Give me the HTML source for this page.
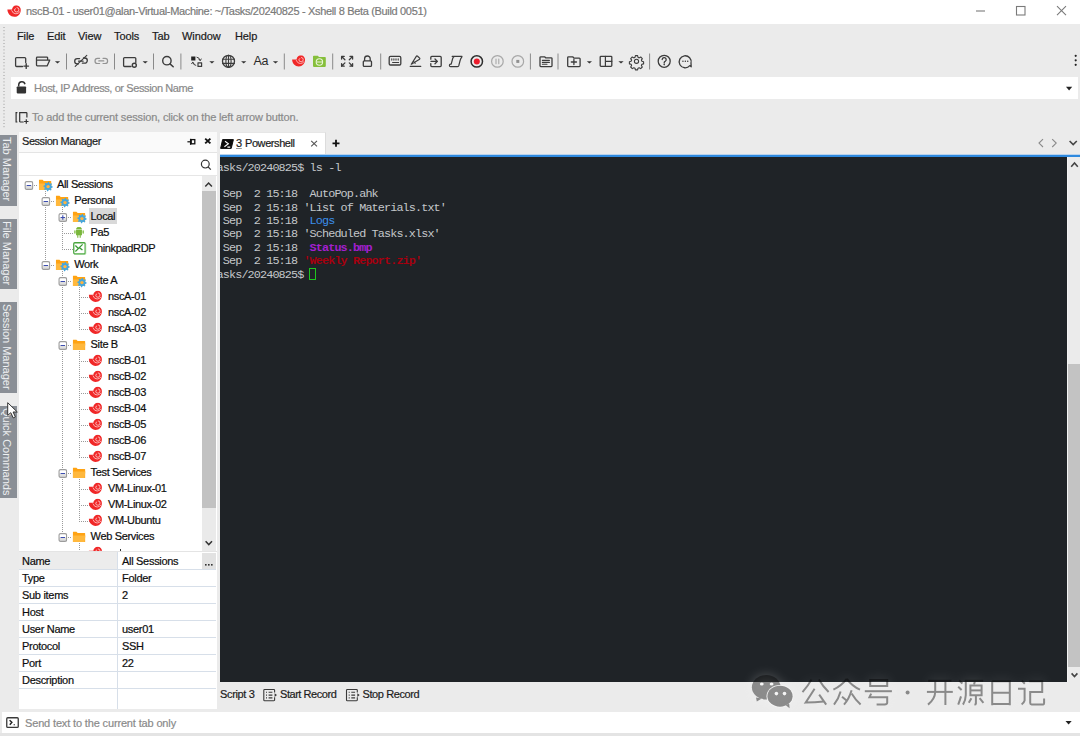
<!DOCTYPE html>
<html><head><meta charset="utf-8">
<style>
*{box-sizing:border-box}
html,body{margin:0;padding:0}
body{width:1080px;height:736px;position:relative;overflow:hidden;background:#ebebeb;font-family:"Liberation Sans",sans-serif;color:#1c1c1c}
.a{position:absolute}
.t{position:absolute;white-space:nowrap;font-size:11px;line-height:13px;-webkit-text-stroke:0.2px currentColor}
#title{left:0;top:0;width:1080px;height:24px;background:#fff}
.menu{top:30px;color:#1a1a1a;letter-spacing:-0.1px}
.vt{position:absolute;left:0;width:17px;background:#8a8f96}
.vtt{position:absolute;left:-1px;color:#eef0f2;font-size:11px;line-height:13px;white-space:nowrap;transform-origin:0 0;transform:rotate(90deg) translate(0,-14px)}
.tree{letter-spacing:-0.35px;color:#0e0e0e}
.prop{letter-spacing:-0.3px;color:#0e0e0e}
.term{position:absolute;font-family:"Liberation Mono",monospace;font-size:11.8px;line-height:13.38px;white-space:pre;color:#c4c7ca;letter-spacing:-0.88px}
</style></head><body>
<svg width="0" height="0" style="position:absolute"><defs>
<symbol id="swirl" viewBox="0 0 14 12">
<path d="M0.4 4.3H4.95A4.3 4.3 0 1 1 13.55 4.6C13.5 8.6 10.8 11.4 7.2 11.4C3.4 11.4 0.5 8.3 0.4 4.3Z" fill="#f02828"/>
<path d="M4.5 5Q5.9 8.6 8.8 8.5Q11.2 8.3 12.7 6.4" stroke="#ffbdbd" stroke-width="0.9" fill="none"/>
<path d="M9.5 2.3A2.2 2.2 0 1 1 7.3 4.6Q7.5 3.5 8.7 3.4" stroke="#ffc4c4" stroke-width="0.9" fill="none"/>
</symbol>
<linearGradient id="bxg" x1="0" y1="0" x2="0" y2="1"><stop offset="0.45" stop-color="#ffffff"/><stop offset="0.55" stop-color="#dedede"/></linearGradient>
<symbol id="boxminus" viewBox="0 0 9 9">
<rect x="0.65" y="0.65" width="7.7" height="7.7" rx="1.6" fill="url(#bxg)" stroke="#9c9c9c" stroke-width="1.3"/>
<path d="M2.3 4.5H6.7" stroke="#3c4db0" stroke-width="1.1"/>
</symbol>
<symbol id="boxplus" viewBox="0 0 9 9">
<rect x="0.65" y="0.65" width="7.7" height="7.7" rx="1.6" fill="url(#bxg)" stroke="#9c9c9c" stroke-width="1.3"/>
<path d="M2.3 4.5H6.7M4.5 2.3V6.7" stroke="#3c4db0" stroke-width="1.1"/>
</symbol>
<symbol id="f" viewBox="0 0 15 13">
<path d="M0 1.2Q0 0.7 0.5 0.7H3.7L4.9 1.9H11.9Q12.4 1.9 12.4 2.4V10.9H0Z" fill="#ffa313"/>
<path d="M0 10.9V4.4H12.6L11.8 10.9Z" fill="#ffb83d"/>
</symbol>
<symbol id="fg" viewBox="0 0 15 13">
<path d="M0 1.2Q0 0.7 0.5 0.7H3.7L4.9 1.9H11.9Q12.4 1.9 12.4 2.4V10.9H0Z" fill="#ffa313"/>
<path d="M0 10.9V4.4H12.6L11.8 10.9Z" fill="#ffb83d"/>
<path d="M9.20 2.90 L10.12 2.99 L10.54 4.37 L11.14 4.69 L12.52 4.28 L13.11 4.99 L12.43 6.26 L12.63 6.92 L13.90 7.60 L13.81 8.52 L12.43 8.94 L12.11 9.54 L12.52 10.92 L11.81 11.51 L10.54 10.83 L9.88 11.03 L9.20 12.30 L8.28 12.21 L7.86 10.83 L7.26 10.51 L5.88 10.92 L5.29 10.21 L5.97 8.94 L5.77 8.28 L4.50 7.60 L4.59 6.68 L5.97 6.26 L6.29 5.66 L5.88 4.28 L6.59 3.69 L7.86 4.37 L8.52 4.17Z" fill="#45a6de"/>
<circle cx="9.2" cy="7.6" r="1.7" fill="#ffb440"/>
</symbol>
<symbol id="android" viewBox="0 0 14 14">
<path d="M3.3 3.6A2.95 2.7 0 0 1 9.2 3.6Z" fill="#79b63b"/>
<path d="M3.3 4.1H9.2V9.2H8V11.7H6.9V9.2H5.6V11.7H4.5V9.2H3.3Z" fill="#79b63b"/>
<rect x="1.4" y="4.2" width="1.5" height="3.6" rx=".7" fill="#8cc457"/>
<rect x="9.7" y="4.2" width="1.5" height="3.6" rx=".7" fill="#8cc457"/>
<path d="M4.4 1L5 1.8M8.1 1L7.5 1.8" stroke="#79b63b" stroke-width=".6"/>
</symbol>
<symbol id="rdp" viewBox="0 0 14 14">
<rect x="1" y="0.75" width="11.4" height="11.1" rx="1" fill="#fff" stroke="#4aa63f" stroke-width="1.3"/>
<path d="M1.4 12.3H12.4Q13 12.3 13 11.6V1.6" fill="none" stroke="#8fcf86" stroke-width="0.9"/>
<path d="M2.6 3.5L5.6 6.6L2.6 9.5M9.9 2.4L6.5 5.6L9.7 8" fill="none" stroke="#3a9a35" stroke-width="1.3"/>
</symbol>
</defs></svg>
<div id="title" class="a"></div>
<div class="t" style="left:26px;top:5px;color:#7a7a7a;letter-spacing:-0.33px">nscB-01 - user01@alan-Virtual-Machine: ~/Tasks/20240825 - Xshell 8 Beta (Build 0051)</div>

<!-- menu -->
<div class="t menu" style="left:17px">File</div>
<div class="t menu" style="left:47px">Edit</div>
<div class="t menu" style="left:78px">View</div>
<div class="t menu" style="left:114px">Tools</div>
<div class="t menu" style="left:152px">Tab</div>
<div class="t menu" style="left:182px">Window</div>
<div class="t menu" style="left:235px">Help</div>

<!-- address bar -->
<div class="a" style="left:11px;top:77px;width:1067px;height:22px;background:#fff"></div>
<div class="t" style="left:34px;top:82px;color:#8a8a8a;letter-spacing:-0.4px">Host, IP Address, or Session Name</div>
<div class="t" style="left:32px;top:111px;color:#8a8a8a;letter-spacing:-0.15px">To add the current session, click on the left arrow button.</div>


<!-- toolbar -->
<svg class="a" style="left:0;top:0" width="1080" height="132" viewBox="0 0 1080 132">
<g fill="none" stroke="#3c3c3c" stroke-width="1.3" stroke-linecap="round" stroke-linejoin="round">
 <!-- grip -->
 <path d="M4 27V128" stroke="#9a9a9a" stroke-width="1" stroke-dasharray="1 2.2" stroke-linecap="butt"/>
 <!-- new session -->
 <path d="M25.7 62.5V58.6a1 1 0 0 0-1-1H16.6a1 1 0 0 0-1 1v6.9a1 1 0 0 0 1 1H22.5"/>
 <path d="M26.2 63.8v4.6M23.9 66.1h4.6" stroke-width="1.4"/>
 <!-- open folder -->
 <path d="M47.6 59.2V57.9a.8.8 0 0 0-.8-.8H37.3a.8.8 0 0 0-.8.8V65.1a.8.8 0 0 0 .8.8H47.1L49.7 60.2H37.6"/>
 <!-- broken link -->
 <path d="M79.6 58.6h-2.3a2.6 2.6 0 0 0 0 5.2h1.2M82.4 63.2h2.3a2.6 2.6 0 0 0 0-5.2h-1.2M78.6 61.2l4.5 0" />
 <path d="M75.2 66.4L86.8 55.4" stroke-width="1.1"/>
 <!-- link gray -->
 <g stroke="#939393" stroke-width="1.2"><path d="M99.6 58.3h-2a2.6 2.6 0 0 0 0 5.2h2M103 58.3h2a2.6 2.6 0 0 1 0 5.2h-2M98.8 60.9h5"/></g>
 <!-- box gear -->
 <path d="M135.8 62.4V58.6a1 1 0 0 0-1-1H124.6a1 1 0 0 0-1 1v6.9a1 1 0 0 0 1 1H131"/>
 <circle cx="134.3" cy="65.2" r="2" stroke-width="1.4"/>
 <!-- search -->
 <circle cx="166.9" cy="60.7" r="4.2" stroke-width="1.4"/>
 <path d="M170 63.9l3.2 2.9" stroke-width="1.5"/>
 <!-- transfer -->
 <rect x="191.2" y="56.5" width="4.2" height="4" fill="#222" stroke="none"/>
 <rect x="198" y="62.8" width="3.6" height="3.6" stroke-width="1.2"/>
 <path d="M197 57.2q2.6 0.3 3.2 3.2M199 59.4l1.2 1.2 1-1.6M195.8 65.4q-2.6-.3-3.1-3.1M193.8 63.4l-1.1-1.2-1 1.5" stroke-width="1"/>
 <!-- globe -->
 <circle cx="228.5" cy="61.3" r="6" stroke-width="1.3"/>
 <ellipse cx="228.5" cy="61.3" rx="2.6" ry="6" stroke-width="1.1"/>
 <path d="M222.6 59.2h11.8M222.6 63.4h11.8M228.5 55.3v12" stroke-width="1.1"/>
 <!-- fullscreen -->
 <path d="M341.6 56.4l3.3 3.3M341.6 56.4v2.6M341.6 56.4h2.6M352.6 56.4l-3.3 3.3M352.6 56.4v2.6M352.6 56.4h-2.6M341.6 66.2l3.3-3.3M341.6 66.2v-2.6M341.6 66.2h2.6M352.6 66.2l-3.3-3.3M352.6 66.2v-2.6M352.6 66.2h-2.6" stroke-width="1.3"/>
 <!-- lock -->
 <path d="M364.6 60.6v-1.8a2.8 2.8 0 0 1 5.6 0v1.8"/>
 <rect x="363.3" y="60.8" width="8.2" height="5.6" rx="1"/>
 <!-- keyboard -->
 <rect x="389.2" y="56.4" width="11.6" height="8.6" rx="1.3"/>
 <path d="M391.8 58.7v1.4M393.9 58.7v1.4M396 58.7v1.4M398.2 58.7v1.4M392.6 62.5h6" stroke-width="1.1"/>
 <!-- pen -->
 <path d="M411.3 64.2L416.3 56.4Q416.9 55.6 417.6 56.2L419.9 58.4M411.3 64.2L419.6 59.2M413.3 61.4L415.3 63.2M410.2 66.3h10.6" stroke-width="1.2"/>
 <!-- arrow into box -->
 <path d="M430.8 59.2V57.4a1 1 0 0 1 1-1H440.2a1 1 0 0 1 1 1V65.6a1 1 0 0 1-1 1H431.8a1 1 0 0 1-1-1V63.6"/>
 <path d="M431 61.4h6.4M435 59l2.4 2.4L435 63.8"/>
 <!-- script -->
 <path d="M452.2 56.4h9.8l-.3 .8q-1 .9-1.6 3.3l-1.3 5.2q-.5.9-1.6.9h-6.6a1.2 1.2 0 0 1 0-2.4h.6l1.5-5.7q.6-1.8 1.8-2.1z" stroke-width="1.2"/>
 <!-- record -->
 <circle cx="476.8" cy="61.4" r="5.7" stroke="#2d2d2d" stroke-width="1.5"/>
 <circle cx="476.8" cy="61.4" r="3" fill="#ec1c2c" stroke="none"/>
 <!-- pause -->
 <circle cx="497.4" cy="61.4" r="5.8" stroke="#a8a8a8" stroke-width="1.2"/>
 <path d="M496 59v4.8M498.8 59v4.8" stroke="#a8a8a8" stroke-width="1.1"/>
 <!-- stop -->
 <circle cx="517.8" cy="61.4" r="5.8" stroke="#a8a8a8" stroke-width="1.2"/>
 <rect x="516.3" y="59.9" width="3" height="3" fill="#909090" stroke="none"/>
 <!-- doc list -->
 <path d="M540 58.2v7.6a.8.8 0 0 0 .8.8h10.4a.8.8 0 0 0 .8-.8v-7.2a.8.8 0 0 0-.8-.8h-5.6l-1-1h-3.8a.8.8 0 0 0-.8.8z" stroke-width="1.3"/>
 <path d="M542.4 60.4h7M542.4 62.4h7M542.4 64.3h4.6" stroke-width="1.1"/>
 <!-- folder plus -->
 <path d="M567.7 57.6v8.2a.8.8 0 0 0 .8.8h10.8a.8.8 0 0 0 .8-.8v-6.8a.8.8 0 0 0-.8-.8h-5.2l-1.4-1.4h-4.2a.8.8 0 0 0-.8.8z" stroke-width="1.3"/>
 <path d="M573.9 59.4v5.2M571.3 62h5.2" stroke-width="1.3"/>
 <!-- layout -->
 <rect x="600.2" y="56.3" width="11.6" height="10" rx=".8"/>
 <path d="M605.4 56.3v10M605.4 61.3h6.4" stroke-width="1.2"/>
 <!-- gear -->
 <path d="M635.4 55.6h2.2l.4 1.7 1.2.6 1.5-.9 1.6 1.6-.9 1.5.5 1.2 1.7.4v2.2l-1.7.4-.5 1.2.9 1.5-1.6 1.6-1.5-.9-1.2.5-.4 1.7h-2.2l-.4-1.7-1.2-.5-1.5.9-1.6-1.6.9-1.5-.5-1.2-1.7-.4v-2.2l1.7-.4.5-1.2-.9-1.5 1.6-1.6 1.5.9 1.2-.6z" stroke-width="1.1"/>
 <circle cx="636.5" cy="61.3" r="2.1" stroke-width="1.1"/>
 <!-- help -->
 <circle cx="664.2" cy="61.3" r="6" stroke-width="1.3"/>
 <path d="M662.2 59.6a2 2 0 1 1 2.9 1.8q-.9.4-.9 1.3v.4" stroke-width="1.3"/>
 <circle cx="664.2" cy="64.6" r=".8" fill="#3c3c3c" stroke="none"/>
 <!-- chat -->
 <path d="M691.2 66.8l-1.4-1.2A6 6 0 1 1 691 63.2z" stroke-width="1.3"/>
 <path d="M682.9 61.3h.1M685.3 61.3h.1M687.7 61.3h.1" stroke-width="1.4"/>
 <!-- separators -->
 <g stroke="#8a8a8a" stroke-width="1" stroke-linecap="butt"><path d="M66.5 53.5v16M114.5 53.5v16M153.5 53.5v16M180.9 53.5v16M284.3 53.5v16M332.7 53.5v16M380.7 53.5v16M530.4 53.5v16M558 53.5v16M649.6 53.5v16"/></g>
</g>
<!-- dropdown triangles -->
<g fill="#333"><path d="M54.9 61.2h5.2l-2.6 2.4z"/><path d="M142.6 61.2h5.2l-2.6 2.4z"/><path d="M209.3 61.2h5.2l-2.6 2.4z"/><path d="M241.1 61.2h5.2l-2.6 2.4z"/><path d="M272.9 61.2h5.2l-2.6 2.4z"/><path d="M586.8 61.2h5.2l-2.6 2.4z"/><path d="M618.4 61.2h5.2l-2.6 2.4z"/></g>
<text x="253.6" y="65" font-family="Liberation Sans" font-size="12.5" fill="#2a2a2a" letter-spacing="-0.5">Aa</text>
<!-- swirl toolbar -->
<g transform="translate(291.5 55.2)"><use href="#swirl" width="14.2" height="11.8"/></g>
<!-- green folder -->
<path d="M313 56.6a.8.8 0 0 1 .8-.8h4l1.2 1.2h6a.8.8 0 0 1 .8.8v8.3a.8.8 0 0 1-.8.8h-11.2a.8.8 0 0 1-.8-.8z" fill="#86bf3b"/>
<circle cx="319.4" cy="62" r="3.2" fill="none" stroke="#e9f5d8" stroke-width="1.1"/>
<path d="M316.5 62h5.8" stroke="#e9f5d8" stroke-width="1"/>
<!-- dots -->
<g fill="#222"><circle cx="1075.7" cy="55.8" r="1.1"/><circle cx="1075.7" cy="60.3" r="1.1"/><circle cx="1075.7" cy="64.8" r="1.1"/></g>
<!-- address lock -->
<path d="M18.7 86.6v-1.8a3.2 3.2 0 0 1 6.3-.6" fill="none" stroke="#333" stroke-width="1.5"/>
<rect x="16.7" y="86.4" width="9.4" height="7" rx=".8" fill="#333"/>
<path d="M1066 86.8h6.2l-3.1 3.6z" fill="#222"/>
<!-- info icon -->
<path d="M17.4 112.6h-1.3v9.4h1.3M19.7 122V112.6h6.5a.7.7 0 0 1 .7.7v4.2M19.7 122h4" fill="none" stroke="#333" stroke-width="1.2"/>
<path d="M26.3 119.3v4.4M24.1 121.5h4.4" fill="none" stroke="#333" stroke-width="1.2"/>
<!-- window controls -->
<path d="M976 11h9" stroke="#7a7a7a" stroke-width="1.1"/>
<rect x="1016.5" y="6.5" width="8.5" height="8.5" fill="none" stroke="#7a7a7a" stroke-width="1.1"/>
<path d="M1057 6.2l9 9M1066 6.2l-9 9" stroke="#7a7a7a" stroke-width="1.1"/>
<!-- title icon -->
<g transform="translate(6.8 5.2)"><use href="#swirl" width="14.6" height="12.2"/></g>
</svg>

<!-- vertical tabs -->
<div class="vt" style="top:135px;height:71px"><div class="vtt" style="top:2px">Tab Manager</div></div>
<div class="vt" style="top:219px;height:70px"><div class="vtt" style="top:2px">File Manager</div></div>
<div class="vt" style="top:302px;height:91px"><div class="vtt" style="top:2px">Session Manager</div></div>
<div class="vt" style="top:406px;height:92px"><div class="vtt" style="top:2px">Quick Commands</div></div>

<!-- session panel -->
<div class="a" style="left:19px;top:132px;width:198px;height:421px;background:#fff"></div>
<div class="a" style="left:19px;top:132px;width:198px;height:21px;background:#fafafa;border-bottom:1px solid #e4e4e4"></div>
<div class="t" style="left:22px;top:135px;letter-spacing:-0.45px">Session Manager</div>
<div class="a" style="left:19px;top:175px;width:198px;height:1px;background:#e6e6e6"></div>
<svg class="a" style="left:180px;top:132px" width="40" height="46" viewBox="180 132 40 46">
<path d="M187.4 141.8H190.6" stroke="#111" stroke-width="1.2"/>
<path d="M190.6 138.8V144.8" stroke="#111" stroke-width="1.3"/>
<rect x="191.2" y="139.6" width="3.6" height="4.2" fill="none" stroke="#111" stroke-width="1.3"/>
<path d="M205.2 138.6L210.4 143.4M210.4 138.6L205.2 143.4" stroke="#111" stroke-width="1.9"/>
<circle cx="205.3" cy="164.1" r="3.9" fill="none" stroke="#333" stroke-width="1.2"/>
<path d="M208.1 166.9L210.8 169.6" stroke="#333" stroke-width="1.3"/>
</svg>
<!-- tree scrollbar -->
<div class="a" style="left:202px;top:176px;width:14px;height:375px;background:#eaeaea"></div>
<div class="a" style="left:202px;top:191px;width:14px;height:317px;background:#c2c2c2"></div>
<svg class="a" style="left:200px;top:176px" width="18" height="376" viewBox="200 176 18 376">
<path d="M205.3 186.4L208.6 183L211.9 186.4" fill="none" stroke="#333" stroke-width="1.5"/>
<path d="M205.6 541.3L208.8 544.6L212 541.3" fill="none" stroke="#333" stroke-width="1.5"/>
</svg>
<!-- properties -->
<div class="a" style="left:19px;top:551px;width:198px;height:2px;background:#e4e4e4"></div>
<div class="a" style="left:120px;top:549px;width:1px;height:2px;background:#333"></div>
<div class="a" style="left:19px;top:552px;width:198px;height:157px;background:#fff"></div>
<div class="a" style="left:19px;top:552px;width:98px;height:17px;background:#ececec"></div>
<div class="a" style="left:202px;top:553px;width:14px;height:16px;background:#e2e2e2"></div>
<svg class="a" style="left:0;top:540px" width="220" height="180" viewBox="0 540 220 180">
<g stroke="#d7dfe9" stroke-width="1">
<path d="M19 569.5H216M19 586.5H216M19 603.5H216M19 620.5H216M19 637.5H216M19 654.5H216M19 671.5H216M19 688.5H216"/>
<path d="M117.5 552V709"/>
</g>
<g fill="#333"><rect x="205" y="564" width="1.6" height="1.6"/><rect x="208" y="564" width="1.6" height="1.6"/><rect x="211" y="564" width="1.6" height="1.6"/></g>
</svg>
<div class="t prop" style="left:22px;top:555px">Name</div><div class="t prop" style="left:122px;top:555px">All Sessions</div>
<div class="t prop" style="left:22px;top:572px">Type</div><div class="t prop" style="left:122px;top:572px">Folder</div>
<div class="t prop" style="left:22px;top:589px">Sub items</div><div class="t prop" style="left:122px;top:589px">2</div>
<div class="t prop" style="left:22px;top:606px">Host</div>
<div class="t prop" style="left:22px;top:623px">User Name</div><div class="t prop" style="left:122px;top:623px">user01</div>
<div class="t prop" style="left:22px;top:640px">Protocol</div><div class="t prop" style="left:122px;top:640px">SSH</div>
<div class="t prop" style="left:22px;top:657px">Port</div><div class="t prop" style="left:122px;top:657px">22</div>
<div class="t prop" style="left:22px;top:674px">Description</div>

<div class="a" style="left:19px;top:176px;width:183px;height:375px;overflow:hidden">
<svg class="a" style="left:-19px;top:-176px" width="220" height="736" viewBox="0 0 220 736">
<path d="M45.5 191V266" stroke="#9a9a9a" stroke-width="1" stroke-dasharray="1 1"/>
<path d="M62.5 207V250" stroke="#9a9a9a" stroke-width="1" stroke-dasharray="1 1"/>
<path d="M62.5 271V538" stroke="#9a9a9a" stroke-width="1" stroke-dasharray="1 1"/>
<path d="M79.5 287V330" stroke="#9a9a9a" stroke-width="1" stroke-dasharray="1 1"/>
<path d="M79.5 351V458" stroke="#9a9a9a" stroke-width="1" stroke-dasharray="1 1"/>
<path d="M79.5 479V522" stroke="#9a9a9a" stroke-width="1" stroke-dasharray="1 1"/>
<path d="M79.5 543V560" stroke="#9a9a9a" stroke-width="1" stroke-dasharray="1 1"/>
<path d="M32 185.5H38" stroke="#9a9a9a" stroke-width="1" stroke-dasharray="1 1"/>
<path d="M49 201.5H55" stroke="#9a9a9a" stroke-width="1" stroke-dasharray="1 1"/>
<path d="M66 217.5H72" stroke="#9a9a9a" stroke-width="1" stroke-dasharray="1 1"/>
<path d="M62 233.5H73" stroke="#9a9a9a" stroke-width="1" stroke-dasharray="1 1"/>
<path d="M62 249.5H73" stroke="#9a9a9a" stroke-width="1" stroke-dasharray="1 1"/>
<path d="M49 265.5H55" stroke="#9a9a9a" stroke-width="1" stroke-dasharray="1 1"/>
<path d="M66 281.5H72" stroke="#9a9a9a" stroke-width="1" stroke-dasharray="1 1"/>
<path d="M79 297.5H90" stroke="#9a9a9a" stroke-width="1" stroke-dasharray="1 1"/>
<path d="M79 313.5H90" stroke="#9a9a9a" stroke-width="1" stroke-dasharray="1 1"/>
<path d="M79 329.5H90" stroke="#9a9a9a" stroke-width="1" stroke-dasharray="1 1"/>
<path d="M66 345.5H72" stroke="#9a9a9a" stroke-width="1" stroke-dasharray="1 1"/>
<path d="M79 361.5H90" stroke="#9a9a9a" stroke-width="1" stroke-dasharray="1 1"/>
<path d="M79 377.5H90" stroke="#9a9a9a" stroke-width="1" stroke-dasharray="1 1"/>
<path d="M79 393.5H90" stroke="#9a9a9a" stroke-width="1" stroke-dasharray="1 1"/>
<path d="M79 409.5H90" stroke="#9a9a9a" stroke-width="1" stroke-dasharray="1 1"/>
<path d="M79 425.5H90" stroke="#9a9a9a" stroke-width="1" stroke-dasharray="1 1"/>
<path d="M79 441.5H90" stroke="#9a9a9a" stroke-width="1" stroke-dasharray="1 1"/>
<path d="M79 457.5H90" stroke="#9a9a9a" stroke-width="1" stroke-dasharray="1 1"/>
<path d="M66 473.5H72" stroke="#9a9a9a" stroke-width="1" stroke-dasharray="1 1"/>
<path d="M79 489.5H90" stroke="#9a9a9a" stroke-width="1" stroke-dasharray="1 1"/>
<path d="M79 505.5H90" stroke="#9a9a9a" stroke-width="1" stroke-dasharray="1 1"/>
<path d="M79 521.5H90" stroke="#9a9a9a" stroke-width="1" stroke-dasharray="1 1"/>
<path d="M66 537.5H72" stroke="#9a9a9a" stroke-width="1" stroke-dasharray="1 1"/>
<path d="M79 553.5H90" stroke="#9a9a9a" stroke-width="1" stroke-dasharray="1 1"/>
<use href="#boxminus" x="24.40" y="181.00" width="9" height="9"/>
<use href="#fg" x="38.85" y="179" width="15" height="13"/>
<use href="#boxminus" x="41.35" y="197.00" width="9" height="9"/>
<use href="#fg" x="55.80" y="195" width="15" height="13"/>
<use href="#boxplus" x="58.30" y="213.00" width="9" height="9"/>
<use href="#fg" x="72.75" y="211" width="15" height="13"/>
<use href="#android" x="72.75" y="226" width="14" height="14"/>
<use href="#rdp" x="72.75" y="242" width="14" height="14"/>
<use href="#boxminus" x="41.35" y="261.00" width="9" height="9"/>
<use href="#fg" x="55.80" y="259" width="15" height="13"/>
<use href="#boxminus" x="58.30" y="277.00" width="9" height="9"/>
<use href="#fg" x="72.75" y="275" width="15" height="13"/>
<use href="#swirl" x="88.30" y="290.6" width="14.2" height="11.9"/>
<use href="#swirl" x="88.30" y="306.6" width="14.2" height="11.9"/>
<use href="#swirl" x="88.30" y="322.6" width="14.2" height="11.9"/>
<use href="#boxminus" x="58.30" y="341.00" width="9" height="9"/>
<use href="#f" x="72.75" y="339" width="15" height="13"/>
<use href="#swirl" x="88.30" y="354.6" width="14.2" height="11.9"/>
<use href="#swirl" x="88.30" y="370.6" width="14.2" height="11.9"/>
<use href="#swirl" x="88.30" y="386.6" width="14.2" height="11.9"/>
<use href="#swirl" x="88.30" y="402.6" width="14.2" height="11.9"/>
<use href="#swirl" x="88.30" y="418.6" width="14.2" height="11.9"/>
<use href="#swirl" x="88.30" y="434.6" width="14.2" height="11.9"/>
<use href="#swirl" x="88.30" y="450.6" width="14.2" height="11.9"/>
<use href="#boxminus" x="58.30" y="469.00" width="9" height="9"/>
<use href="#f" x="72.75" y="467" width="15" height="13"/>
<use href="#swirl" x="88.30" y="482.6" width="14.2" height="11.9"/>
<use href="#swirl" x="88.30" y="498.6" width="14.2" height="11.9"/>
<use href="#swirl" x="88.30" y="514.6" width="14.2" height="11.9"/>
<use href="#boxminus" x="58.30" y="533.00" width="9" height="9"/>
<use href="#f" x="72.75" y="531" width="15" height="13"/>
<use href="#swirl" x="88.30" y="546.6" width="14.2" height="11.9"/>
</svg>
<div class="a" style="left:-19px;top:-176px;width:220px;height:736px">
<div class="t tree" style="left:57px;top:178px">All Sessions</div>
<div class="t tree" style="left:74.2px;top:194px">Personal</div>
<div class="a" style="left:88.7px;top:208px;width:28.3px;height:16px;background:#d9d9d9"></div>
<div class="t tree sel" style="left:90.6px;top:210px">Local</div>
<div class="t tree" style="left:90.6px;top:226px">Pa5</div>
<div class="t tree" style="left:90.6px;top:242px">ThinkpadRDP</div>
<div class="t tree" style="left:74.2px;top:258px">Work</div>
<div class="t tree" style="left:90.6px;top:274px">Site A</div>
<div class="t tree" style="left:108px;top:290px">nscA-01</div>
<div class="t tree" style="left:108px;top:306px">nscA-02</div>
<div class="t tree" style="left:108px;top:322px">nscA-03</div>
<div class="t tree" style="left:90.6px;top:338px">Site B</div>
<div class="t tree" style="left:108px;top:354px">nscB-01</div>
<div class="t tree" style="left:108px;top:370px">nscB-02</div>
<div class="t tree" style="left:108px;top:386px">nscB-03</div>
<div class="t tree" style="left:108px;top:402px">nscB-04</div>
<div class="t tree" style="left:108px;top:418px">nscB-05</div>
<div class="t tree" style="left:108px;top:434px">nscB-06</div>
<div class="t tree" style="left:108px;top:450px">nscB-07</div>
<div class="t tree" style="left:90.6px;top:466px">Test Services</div>
<div class="t tree" style="left:108px;top:482px">VM-Linux-01</div>
<div class="t tree" style="left:108px;top:498px">VM-Linux-02</div>
<div class="t tree" style="left:108px;top:514px">VM-Ubuntu</div>
<div class="t tree" style="left:90.6px;top:530px">Web Services</div>
<div class="t tree" style="left:108px;top:546px"></div>
</div></div>
<!-- terminal -->
<div class="a" style="left:220px;top:132px;width:106px;height:23px;background:#fff;border-right:1px solid #dcdcdc;border-top:1px solid #e6e6e6"></div>
<div class="a" style="left:220px;top:154px;width:860px;height:1px;background:#b9d3ee"></div>
<div class="a" style="left:220px;top:155px;width:860px;height:2px;background:#2e89de"></div>
<div class="a" style="left:220px;top:157px;width:847px;height:525px;background:#1f2327;overflow:hidden">
<div class="term" style="left:-3.4px;top:4.6px">asks/20240825$ ls -l

 Sep  2 15:18  AutoPop.ahk
 Sep  2 15:18 'List of Materials.txt'
 Sep  2 15:18  <span style="color:#3b8eea">Logs</span>
 Sep  2 15:18 'Scheduled Tasks.xlsx'
 Sep  2 15:18  <b style="color:#a31fcf">Status.bmp</b>
 Sep  2 15:18 <b style="color:#a5000f">'Weekly Report.zip'</b>
asks/20240825$ </div>
<div class="a" style="left:89px;top:110.5px;width:7px;height:12.5px;border:1.3px solid #1fc51f"></div>
</div>
<div class="a" style="left:1067px;top:157px;width:13px;height:525px;background:#ebebeb;border-left:1px solid #f4f4f4"></div>
<div class="a" style="left:1068px;top:364px;width:12px;height:303px;background:#c3c3c3"></div>
<svg class="a" style="left:210px;top:132px" width="870" height="40" viewBox="210 132 870 40">
<path d="M222.6 139.6H233.4L231.2 148.4H220.6Z" fill="#0c0c0c" stroke="#0c0c0c" stroke-width="1" stroke-linejoin="round"/>
<path d="M225 141.2L228.4 143.8L224.4 146.8M227.4 147.1H230.2" fill="none" stroke="#fff" stroke-width="1.1"/>
<path d="M311.2 140.8L317 146.4M317 140.8L311.2 146.4" stroke="#555" stroke-width="1.1"/>
<path d="M336 139.8V146.8M332.5 143.3H339.5" stroke="#111" stroke-width="1.8"/>
<path d="M1043 139.2L1039 143.1L1043 147M1052.2 139.2L1056.2 143.1L1052.2 147" fill="none" stroke="#8a8a8a" stroke-width="1.1"/>
<path d="M1069.6 141L1073.2 144.6L1076.8 141" fill="none" stroke="#444" stroke-width="1.6"/>
<path d="M1071.2 166.7L1074.5 163L1077.8 166.7" fill="none" stroke="#444" stroke-width="1.6"/>
</svg>
<div class="t" style="left:236px;top:137px;letter-spacing:-0.3px;text-decoration:underline;text-decoration-color:#999">3</div>
<div class="t" style="left:245px;top:137px;letter-spacing:-0.42px">Powershell</div>
<!-- bottom bar -->
<svg class="a" style="left:200px;top:670px" width="880" height="40" viewBox="200 670 880 40">
<path d="M1071.6 673.4L1074.5 676.6L1077.4 673.4" fill="none" stroke="#444" stroke-width="1.6"/>
<g fill="none" stroke="#3a3a3a" stroke-width="1.1">
<path d="M274.6 692.5V690.3a.8.8 0 0 0-.8-.8H264.6a.8.8 0 0 0-.8.8V699.9a.8.8 0 0 0 .8.8H273.8a.8.8 0 0 0 .8-.8V697.3"/>
<path d="M266 692.3H267M268.6 692.3H272.4M266 695.1H267M268.6 695.1H272.4M266 697.9H267M268.6 697.9H272.4"/>
<path d="M357.3 692.5V690.3a.8.8 0 0 0-.8-.8H347.3a.8.8 0 0 0-.8.8V699.9a.8.8 0 0 0 .8.8H356.5a.8.8 0 0 0 .8-.8V697.3"/>
<path d="M348.7 692.3H349.7M351.3 692.3H355.1M348.7 695.1H349.7M351.3 695.1H355.1M348.7 697.9H349.7M351.3 697.9H355.1"/>
</g>
<path d="M274.6 693.3L277 695.1L274.6 696.9Z M357.3 693.3L359.7 695.1L357.3 696.9Z" fill="#3a3a3a"/>
</svg>
<div class="t" style="left:220px;top:688px;letter-spacing:-0.35px">Script 3</div>
<div class="t" style="left:280px;top:688px;letter-spacing:-0.45px">Start Record</div>
<div class="t" style="left:362.5px;top:688px;letter-spacing:-0.4px">Stop Record</div>

<!-- send bar -->
<div class="a" style="left:0;top:733px;width:1080px;height:3px;background:#e4e4e4"></div>
<div class="a" style="left:2px;top:712px;width:1078px;height:21px;background:#fff"></div>
<svg class="a" style="left:0;top:710px" width="1080" height="26" viewBox="0 710 1080 26">
<rect x="6.75" y="717.75" width="11.5" height="9.7" rx="1" fill="none" stroke="#3a3a3a" stroke-width="1.3"/>
<path d="M9.6 720.2L11.9 722.3L9.8 724.8" fill="none" stroke="#222" stroke-width="1.4"/>
<rect x="13.6" y="724.2" width="1.3" height="1.1" fill="#333"/>
<path d="M1065.5 721h6.2l-3.1 3.4z" fill="#222"/>
</svg>
<div class="t" style="left:25px;top:717px;color:#8a8a8a;letter-spacing:-0.15px">Send text to the current tab only</div>
<!-- watermark -->
<svg class="a" style="left:700px;top:640px" width="380" height="80" viewBox="700 640 380 80">
<defs>
<filter id="halo" x="-20%" y="-60%" width="140%" height="220%"><feColorMatrix type="matrix" values="0 0 0 0 1  0 0 0 0 1  0 0 0 0 1  0 0 0 1 0"/><feGaussianBlur stdDeviation="5.5"/></filter>
<g id="wmg">
<ellipse cx="766.25" cy="687.2" rx="14.35" ry="12.3" fill="#000"/>
<path d="M756 697.5L756.8 701.4L761.8 698.6Z" fill="#000"/>
<ellipse cx="780" cy="696.2" rx="13.5" ry="11.3" fill="#fff"/>
<ellipse cx="780" cy="696.2" rx="12.6" ry="10.5" fill="#000"/>
<path d="M785.5 705L789.6 708.2L789.2 703.8Z" fill="#000"/>
<ellipse cx="761.8" cy="684" rx="1.9" ry="1.5" fill="#fff"/>
<ellipse cx="771.6" cy="684" rx="1.9" ry="1.5" fill="#fff"/>
<circle cx="776.4" cy="693.6" r="1.8" fill="#fff"/>
<circle cx="784.5" cy="693.6" r="1.8" fill="#fff"/>
<g fill="none" stroke="#000" stroke-width="2" stroke-linecap="butt" stroke-linejoin="miter">
<!-- gong -->
<path d="M811.4 679.6Q808 686 802.5 692.2"/>
<path d="M818.9 679.6Q822.8 686.5 828.6 692"/>
<path d="M814.6 688.8L805.6 702.6Q815 702.2 823.8 701.4"/>
<path d="M819.2 694.6L826.2 704.6"/>
<!-- zhong -->
<path d="M846.8 678.8Q841 686 833.4 689.6"/>
<path d="M846.8 678.8Q852 686 860 689.6"/>
<path d="M840.6 691.4Q838.5 699 834 704.6"/>
<path d="M842 696.8L846.6 700.6"/>
<path d="M851.6 690.2Q849 699 844 704.6"/>
<path d="M851.6 693.6Q855.5 700 860.6 704.6"/>
<!-- hao -->
<path d="M870.2 679.9H887.2V686H870.2Z"/>
<path d="M864.8 691.2H891.9"/>
<path d="M871.2 693.6L869.4 697.3H887.2V702.8Q887 704.2 884.6 704.4H876.6"/>
<!-- dot -->
<circle cx="907.6" cy="692.6" r="2" fill="#000" stroke="none"/>
<!-- kai -->
<path d="M928.2 680.8H951.4"/>
<path d="M926.9 691.9H952.8"/>
<path d="M935.2 680.8V692Q935 699 928 704.6"/>
<path d="M945.4 680.8V705"/>
<!-- yuan -->
<path d="M959.2 680.4L962.4 683.4"/>
<path d="M958.2 686.8L961.6 690"/>
<path d="M961 696.4Q959.8 700.5 958.2 704.6"/>
<path d="M964.8 680.8H983.2"/>
<path d="M965.8 680.8V695Q965.6 700.5 963 704.6"/>
<path d="M975 681L974 684.6"/>
<path d="M970.4 685.4H981.6V695.2H970.4Z"/>
<path d="M970.4 690.4H981.6"/>
<path d="M975.9 695.2V703.6Q975.8 704.6 974.4 704.6"/>
<path d="M971.4 698.2L968.8 702.8"/>
<path d="M979.6 698.2L983.4 702.8"/>
<!-- ri -->
<path d="M992.2 681.3H1009.8V705.2M992.2 705.2V681.3M992.2 692.8H1009.8M992.2 704H1009.8"/>
<!-- ji -->
<path d="M1021.8 680.6L1024.8 683.8"/>
<path d="M1018 688.7H1024.6V700.6Q1024 703 1021.6 704.4"/>
<path d="M1029.3 681.3H1042.2V692H1030.2V703Q1030.2 704.4 1031.6 704.4H1043.4Q1044.1 704.4 1044.1 703V698.6"/>
</g>
</g>
</defs>
<use href="#wmg" filter="url(#halo)" opacity="0.22"/>
<use href="#wmg" opacity="0.41"/>
</svg>
<!-- cursor -->
<svg class="a" style="left:7px;top:402px" width="16" height="22" viewBox="0 0 16 22">
<path d="M0.7 0.7V13.4L3.8 10.7L6.2 15.9L8.4 14.9L6.1 10H10.3Z" fill="#fff" stroke="#333" stroke-width="1" stroke-linejoin="round"/>
</svg>
</body></html>
